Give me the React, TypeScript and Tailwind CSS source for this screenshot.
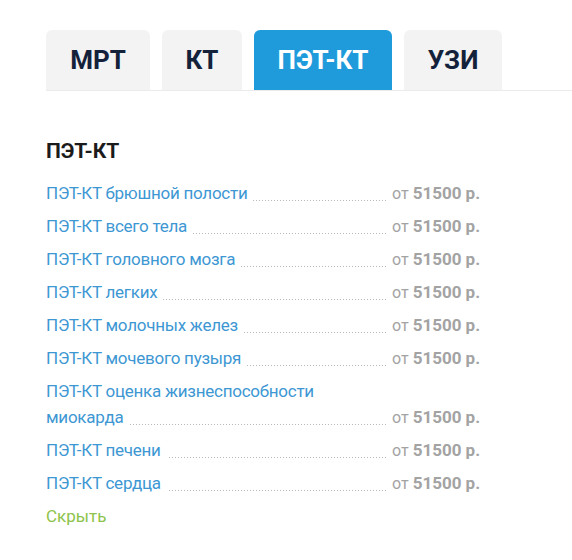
const tabs = ['МРТ', 'КТ', 'ПЭТ-КТ', 'УЗИ'];
const tabWidths: Record<string, string> = {
  'МРТ': 'w-[104px]',
  'КТ': 'w-[80px]',
  'ПЭТ-КТ': 'w-[138px]',
  'УЗИ': 'w-[98px]',
};

const items = [
  'ПЭТ-КТ брюшной полости',
  'ПЭТ-КТ всего тела',
  'ПЭТ-КТ головного мозга',
  'ПЭТ-КТ легких',
  'ПЭТ-КТ молочных желез',
  'ПЭТ-КТ мочевого пузыря',
  'ПЭТ-КТ оценка жизнеспособности миокарда',
  'ПЭТ-КТ печени',
  'ПЭТ-КТ сердца',
];

function PriceRow({ name }: { name: string }) {
  return (
    <div className="flex items-end">
      {/* name with dotted leader behind it */}
      <div className="flex-1 text-[17px] leading-[26px] tracking-[-0.25px] text-[#3d97d3] [background-image:linear-gradient(to_right,#b8b8b8_1px,transparent_1px)] [background-size:3px_1px] bg-repeat-x [background-position:0_calc(100%-5px)]">
        <span className="bg-white pr-[6px]">{name}</span>
      </div>
      <div className="flex h-[26px] w-[95px] flex-none items-baseline pl-[6px] leading-[26px] text-[#a3a3a3]">
        <span className="text-[16px]">от&nbsp;</span>
        <span className="text-[17px] font-bold">51500 р.</span>
      </div>
    </div>
  );
}

export default function App() {
  return (
    <div className="min-h-[560px] bg-white pl-[46px] pt-[30px] font-['Roboto',sans-serif]">
      {/* Tabs */}
      <div className="flex gap-3 border-b border-[#ebebeb]">
        {tabs.map((t) => {
          const active = t === 'ПЭТ-КТ';
          return (
            <div
              key={t}
              className={`${tabWidths[t]} flex h-[60px] items-center justify-center rounded-t-[6px] text-[26px] font-bold ${
                active ? 'bg-[#1f9bdc] text-white' : 'bg-[#f3f3f3] text-[#13213a]'
              }`}
            >
              {t}
            </div>
          );
        })}
      </div>

      {/* Section */}
      <div className="w-[435px] pt-[46px]">
        <h2 className="text-[21px] font-bold leading-[28px] text-[#1b1b1b]">ПЭТ-КТ</h2>
        <div className="mt-[15px] flex flex-col gap-[7px]">
          {items.map((n) => (
            <PriceRow key={n} name={n} />
          ))}
        </div>
        <div className="mt-[7px] text-[17px] leading-[26px] text-[#8dc34a]">Скрыть</div>
      </div>
    </div>
  );
}
